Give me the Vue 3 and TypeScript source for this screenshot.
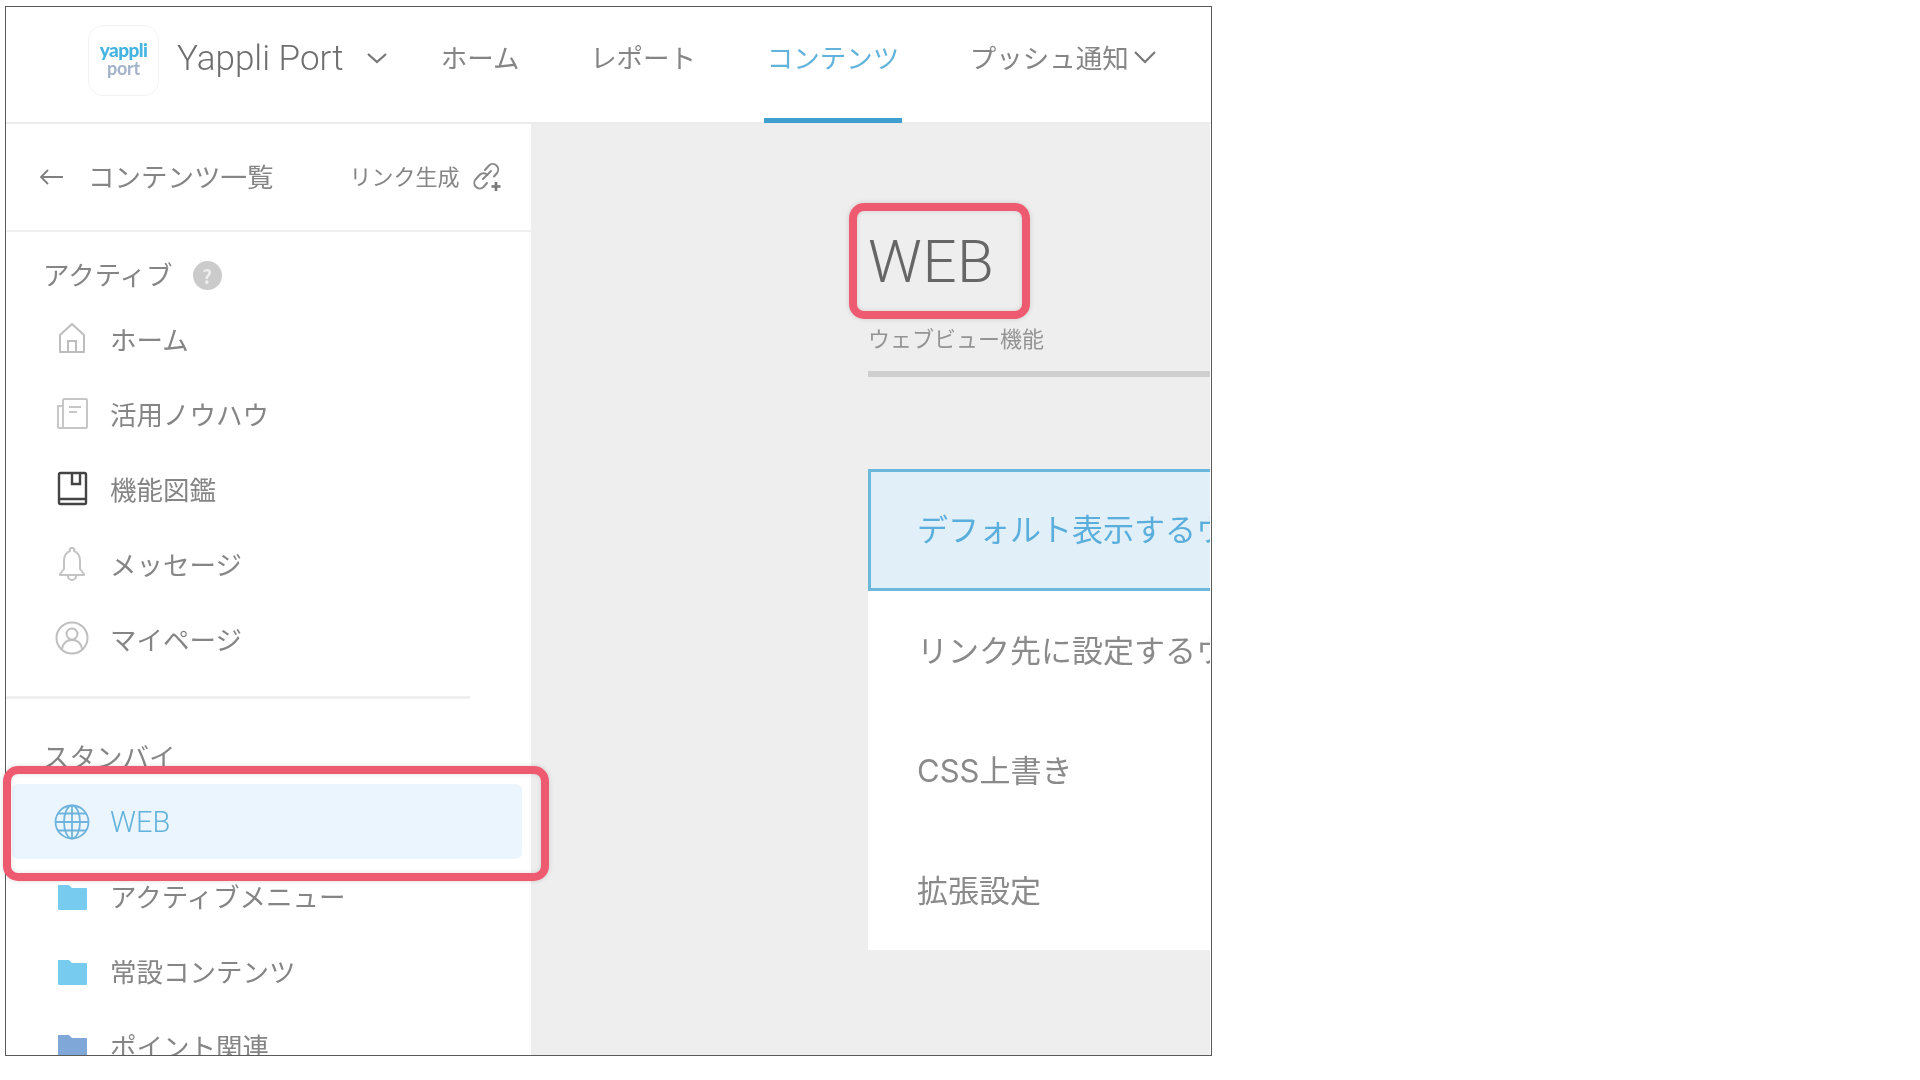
<script setup lang="ts">
interface Item { label: string; icon: string }
const activeItems: Item[] = [
  { label: 'ホーム', icon: 'home' },
  { label: '活用ノウハウ', icon: 'doc' },
  { label: '機能図鑑', icon: 'book' },
  { label: 'メッセージ', icon: 'bell' },
  { label: 'マイページ', icon: 'user' },
]
const folders = [
  { label: 'アクティブメニュー', tone: 'sky' },
  { label: '常設コンテンツ', tone: 'sky' },
  { label: 'ポイント関連', tone: 'steel' },
]
const navItems = [
  { label: 'ホーム', current: false },
  { label: 'レポート', current: false },
  { label: 'コンテンツ', current: true },
]
const rows = [
  { label: 'デフォルト表示するウェブビュー', on: true },
  { label: 'リンク先に設定するウェブビュー', on: false },
  { label: 'CSS上書き', on: false },
  { label: '拡張設定', on: false },
]
</script>

<template>
  <div class="page">
    <div class="frame">
      <header class="topbar soft">
        <div class="logo">
          <span class="logo-top">yappli</span>
          <span class="logo-bottom">port</span>
        </div>
        <span class="brand">Yappli Port</span>
        <svg class="brand-chev" viewBox="0 0 22 12" fill="none"><path d="M2 2l9 8 9-8" stroke="#777" stroke-width="2.2" /></svg>
        <nav class="nav">
          <span v-for="n in navItems" :key="n.label" class="nav-item" :class="{ current: n.current }">{{ n.label }}</span>
          <span class="nav-item nav-last">
            プッシュ通知
            <svg class="nav-chev" viewBox="0 0 24 14" fill="none"><path d="M2 2l10 10L22 2" stroke="#777" stroke-width="2.2" /></svg>
          </span>
        </nav>
      </header>

      <div class="body soft">
        <aside class="sidebar">
          <div class="side-head">
            <svg class="arrow" viewBox="0 0 26 20" fill="none"><path d="M25 10H3M10 3l-7 7 7 7" stroke="#808080" stroke-width="1.800" /></svg>
            <span class="side-title">コンテンツ一覧</span>
            <span class="side-link">リンク生成</span>
            <svg class="link-icon" viewBox="0 0 30 32" fill="none">
              <path d="M13 9l4-4.500a5.500 5.500 0 0 1 8 7.500l-3 3.500M15 22l-3.500 4a5.500 5.500 0 0 1-8-7.500l4-4.500a5.500 5.500 0 0 1 8 0M11 18l8-8" stroke="#888" stroke-width="2" stroke-linecap="round" />
              <path d="M24 21v9M19.500 25.500h9" stroke="#777" stroke-width="2.600" />
            </svg>
          </div>

          <div class="section-head first">
            <span>アクティブ</span>
            <span class="help">?</span>
          </div>

          <div v-for="it in activeItems" :key="it.label" class="item">
            <svg class="icon" viewBox="0 0 36 36" fill="none">
              <g v-if="it.icon === 'home'" stroke="#bdbdbd" stroke-width="2">
                <path d="M18 4L6 15v17h24V15z" stroke-linejoin="round" />
                <path d="M14 32V21h8v11" />
              </g>
              <g v-else-if="it.icon === 'doc'" stroke="#c6c6c6" stroke-width="2">
                <rect x="9" y="4" width="24" height="29" rx="1" />
                <path d="M9 11H4v21a1 1 0 0 0 1 1h4M15 12h12M15 17h8" />
              </g>
              <g v-else-if="it.icon === 'book'" stroke="#444" stroke-width="2.400">
                <rect x="5" y="3" width="27" height="31" rx="1.500" />
                <path d="M5 29h27M18 3v11h8V3" />
              </g>
              <g v-else-if="it.icon === 'bell'" stroke="#c4c4c4" stroke-width="2">
                <path d="M18 3a2 2 0 0 1 2 3c5 2 6 6 6 10v8l4 5v1H6v-1l4-5v-8c0-4 1-8 6-10a2 2 0 0 1 2-3z" stroke-linejoin="round" />
                <path d="M14 31a4 4 0 0 0 8 0" />
              </g>
              <g v-else stroke="#bfbfbf" stroke-width="2">
                <circle cx="18" cy="18" r="15.500" />
                <circle cx="18" cy="14" r="5.500" />
                <path d="M8 29c1-6 5-9 10-9s9 3 10 9" />
              </g>
            </svg>
            <span class="item-label">{{ it.label }}</span>
          </div>

          <div class="divider"></div>

          <div class="section-head">
            <span>スタンバイ</span>
          </div>

          <div class="item selected">
            <svg class="icon" viewBox="0 0 36 36" fill="none" stroke="#6fb4dc" stroke-width="1.800">
              <circle cx="18" cy="18" r="16.500" />
              <ellipse cx="18" cy="18" rx="8" ry="16.500" />
              <path d="M18 1.500v33M1.500 18h33M4 9.500h28M4 26.500h28" />
            </svg>
            <span>WEB</span>
          </div>

          <div v-for="f in folders" :key="f.label" class="item">
            <svg class="icon" :class="f.tone" viewBox="0 0 36 36">
              <path d="M4 6h11l3 3h14a1 1 0 0 1 1 1v20a1 1 0 0 1-1 1H5a1 1 0 0 1-1-1z" fill="currentColor" />
            </svg>
            <span class="folder-label">{{ f.label }}</span>
          </div>
        </aside>

        <main class="main">
          <h1 class="title">WEB</h1>
          <p class="subtitle">ウェブビュー機能</p>
          <div class="rule"></div>
          <div class="tabs">
            <div v-for="r in rows" :key="r.label" class="tab" :class="{ on: r.on }">{{ r.label }}</div>
          </div>
        </main>
      </div>
    </div>

    <div class="callout callout-side"></div>
    <div class="callout callout-title"></div>
  </div>
</template>

<style>
html, body { margin: 0; background: #fff; }
</style>

<style scoped>
.page {
  position: relative;
  width: 1920px;
  height: 1080px;
  padding: 6px 0 0 5px;
  box-sizing: border-box;
  overflow: hidden;
  font-family: "Noto Sans CJK JP", "Noto Sans", sans-serif;
  color: #858585;
}
.frame {
  width: 1207px;
  height: 1050px;
  box-sizing: border-box;
  border: 1.500px solid #5a5a5a;
  overflow: hidden;
  display: flex;
  flex-direction: column;
  background: #fff;
}
.soft { filter: blur(0.55px); }
.topbar {
  height: 117px;
  flex: none;
  display: flex;
  align-items: center;
  padding: 0 0 9px 82px;
  border-bottom: 2px solid #ececec;
  box-sizing: border-box;
}
.logo {
  width: 71px;
  height: 71px;
  flex: none;
  box-sizing: border-box;
  border: 1.500px solid #f2f2f2;
  border-radius: 15px;
  display: flex;
  flex-direction: column;
  align-items: center;
  justify-content: center;
  font-family: Lato, sans-serif;
  line-height: 18px;
  padding-bottom: 2px;
}
.logo-top { color: #45b4e0; font-weight: 900; font-size: 19px; letter-spacing: -0.6px; }
.logo-bottom { color: #a3b3cb; font-weight: 700; font-size: 18px; letter-spacing: -0.2px; }
.brand {
  margin: 0 0 4px 18px;
  font-family: Roboto, sans-serif;
  font-size: 35px;
  font-weight: 300;
  color: #6e6e6e;
  white-space: nowrap;
}
.brand-chev { width: 22px; height: 12px; margin: 0 0 4px 23px; flex: none; }
.nav {
  display: flex;
  align-items: center;
  gap: 70.600px;
  margin: 0 0 7px 52.400px;
}
.nav-item {
  position: relative;
  font-size: 26.500px;
  font-weight: 400;
  white-space: nowrap;
  color: #858585;
  display: flex;
  align-items: center;
}
.nav-item.current { color: #62b3dc; }
.nav-item.current::after {
  content: "";
  position: absolute;
  left: -3px;
  right: -3px;
  top: 81px;
  height: 5px;
  background: #3f9fd0;
}
.nav-chev { width: 24px; height: 14px; margin-left: 4px; }
.body { flex: 1; display: flex; min-height: 0; }
.sidebar {
  width: 525px;
  flex: none;
  overflow: hidden;
  background: #fff;
}
.side-head {
  height: 108px;
  box-sizing: border-box;
  border-bottom: 2px solid #f0f0f0;
  display: flex;
  align-items: center;
  padding: 0 0 3px 32px;
}
.arrow { width: 26px; height: 20px; flex: none; margin-top: 3px; }
.side-title { margin-left: 24px; font-size: 26.500px; white-space: nowrap; }
.side-link { margin: 0 0 2px 76px; font-size: 22px; white-space: nowrap; }
.link-icon { width: 30px; height: 32px; margin: 3px 0 0 12px; flex: none; }
.section-head {
  height: 85px;
  box-sizing: border-box;
  padding: 29px 0 0 37px;
  font-size: 26.500px;
  line-height: 56px;
  display: flex;
  align-items: flex-start;
}
.section-head.first { height: 68px; padding-top: 14px; }
.help {
  width: 29px;
  height: 29px;
  margin: 15px 0 0 20px;
  border-radius: 50%;
  background: #cbcbcb;
  color: #eee;
  font-size: 19px;
  font-weight: 700;
  line-height: 29px;
  text-align: center;
}
.item {
  height: 75px;
  width: 510px;
  margin-left: 6px;
  padding-left: 42px;
  box-sizing: border-box;
  display: flex;
  align-items: center;
  gap: 20px;
  font-size: 26.500px;
  white-space: nowrap;
  color: #858585;
}
.item-label { position: relative; top: 1px; }
.folder-label { position: relative; top: -1px; }
.icon { width: 36px; height: 36px; flex: none; }
.sky { color: #76cbee; }
.steel { color: #7fa8d8; }
.selected {
  background: #ebf5fd;
  border-radius: 6px;
  color: #62b3dc;
  font-family: Roboto, sans-serif;
  font-size: 29px;
  font-weight: 300;
}
.divider { height: 3px; width: 464px; margin-top: 21px; background: #efefef; }
.main {
  flex: 1;
  min-width: 0;
  overflow: hidden;
  background: #eee;
  padding: 103px 0 0 337px;
  margin-right: 1px;
  box-sizing: border-box;
}
.title {
  margin: 0;
  height: 70px;
  font-family: Roboto, sans-serif;
  font-weight: 300;
  font-size: 60px;
  letter-spacing: 0.6px;
  line-height: 70px;
  color: #666;
}
.subtitle {
  margin: 25px 0 0;
  height: 30px;
  line-height: 30px;
  font-size: 22px;
  color: #949494;
  white-space: nowrap;
}
.rule { height: 6px; margin-top: 19px; background: #cfcfcf; }
.tabs { margin-top: 92px; background: #fff; }
.tab {
  height: 120px;
  box-sizing: border-box;
  padding: 0 0 5px 49px;
  display: flex;
  align-items: center;
  font-family: Inter, "Noto Sans CJK JP", sans-serif;
  font-size: 31px;
  white-space: nowrap;
  overflow: hidden;
  color: #8a8a8a;
}
.tab:last-child { height: 119px; }
.tab.on {
  height: 122px;
  padding: 0 0 5px 46px;
  border: 3px solid #6bb8dc;
  border-right: 0;
  background: #e1eff8;
  color: #5aaedc;
}
.callout {
  position: absolute;
  box-sizing: border-box;
  border: 8px solid #ee5a70;
  border-radius: 15px;
  box-shadow: 0 0 5px rgba(0, 0, 0, 0.15), inset 0 0 5px rgba(0, 0, 0, 0.12);
}
.callout-side { left: 3px; top: 766px; width: 546px; height: 115px; }
.callout-title { left: 849px; top: 203px; width: 181px; height: 116px; }
</style>
